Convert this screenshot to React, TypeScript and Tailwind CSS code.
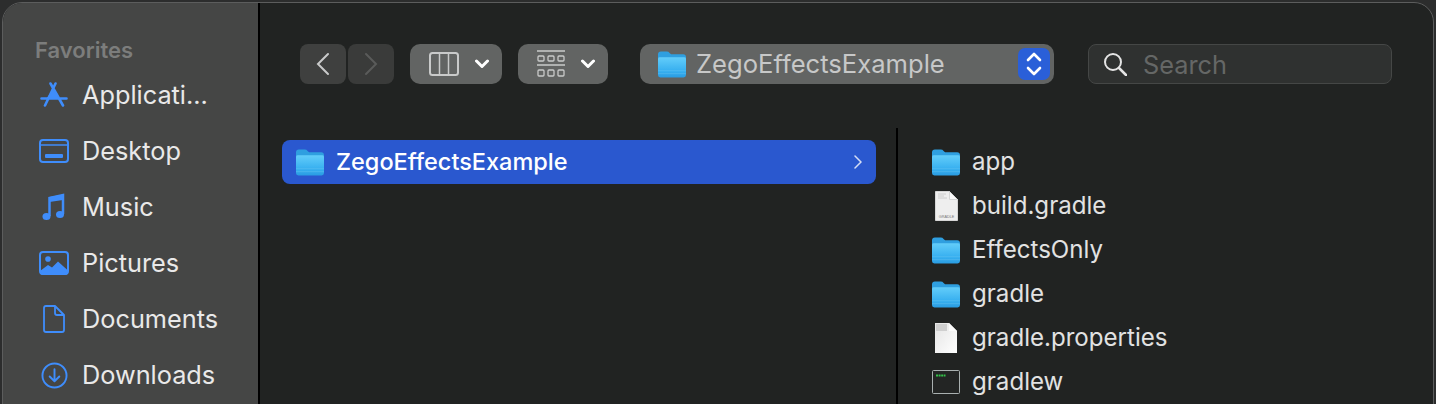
import type { ReactNode } from "react";

const FONT = "font-['Inter','Liberation_Sans',sans-serif]";

function FolderIcon({ className }: { className: string }) {
  return (
    <svg viewBox="0 0 29 27" className={className}>
      <defs>
        <linearGradient id="folderFront" x1="0" y1="0" x2="0" y2="1">
          <stop offset="0" stopColor="#63cdfa" />
          <stop offset="0.7" stopColor="#35aeef" />
          <stop offset="1" stopColor="#2a9ce2" />
        </linearGradient>
      </defs>
      <path d="M0 3q0-3 3-3h6q2 0 3 1.500l1.500 1.500h12.500q3 0 3 3v6h-29z" fill="#2f9fe0" />
      <path d="M0 7.500q0-1.500 2-1.500h25q2 0 2 1.500v17q0 2.500-2.500 2.500h-24q-2.500 0-2.500-2.500z" fill="url(#folderFront)" />
      <path d="M0 20h29M0 23h29" stroke="#6cc6f2" strokeOpacity="0.45" />
    </svg>
  );
}

function GradleFile() {
  return (
    <svg viewBox="0 0 23 30" className="h-[30px] w-[23px]">
      <path d="M0.500 0.500h14l8 8v21h-22z" fill="#eeeeee" stroke="#d6d6d6" />
      <path d="M14.500 0.500v8h8z" fill="#fafafa" stroke="#d6d6d6" />
      <path d="M3 3h8M3 5h6M3 7h9" stroke="#c4c4c4" strokeWidth="0.800" />
      <text x="11.500" y="27" textAnchor="middle" fontSize="3.800" fill="#777" fontFamily="Liberation Sans, sans-serif">GRADLE</text>
    </svg>
  );
}

function PropertiesFile() {
  return (
    <svg viewBox="0 0 22 30" className="h-[30px] w-[22px]">
      <defs>
        <linearGradient id="sheet" x1="0" y1="0" x2="1" y2="1">
          <stop offset="0" stopColor="#e4e4e4" />
          <stop offset="1" stopColor="#ffffff" />
        </linearGradient>
      </defs>
      <path d="M0 0h14l8 8v22h-22z" fill="url(#sheet)" />
      <path d="M14 0v8h8z" fill="#fbfbfb" />
      <rect x="1" y="1" width="11" height="7" fill="#cfcfcf" />
    </svg>
  );
}

function TerminalFile() {
  return (
    <svg viewBox="0 0 28 24" className="h-[24px] w-[28px]">
      <rect x="0.500" y="0.500" width="27" height="23" rx="1" fill="#232524" stroke="#a9b0b0" />
      <path d="M4 5.500h9.500" stroke="#35c24a" strokeWidth="2" strokeDasharray="2 0.600" />
    </svg>
  );
}

function SideRow({ icon, label }: { icon: ReactNode; label: string }) {
  return (
    <div className="flex h-[56px] items-center">
      <div className="flex w-[38px] shrink-0 items-center justify-center">{icon}</div>
      <span className="ml-[9px] text-[25.300px] leading-none text-[#e9e9e9]">{label}</span>
    </div>
  );
}

function ListRow({ icon, label }: { icon: ReactNode; label: string }) {
  return (
    <div className="flex h-[44px] items-center">
      <div className="flex w-[30px] shrink-0 items-center justify-center">{icon}</div>
      <span className="ml-[11px] text-[24.100px] leading-none text-[#e2e2e2]">{label}</span>
    </div>
  );
}

export default function App() {
  return (
    <div className={`h-[404px] w-[1436px] overflow-hidden bg-[#2c2d2d] pl-[2px] pr-[2px] pt-[2px] ${FONT}`}>
      <div className="flex h-[420px] overflow-hidden rounded-t-[20px] border border-[#5c5d5d] bg-[#212322]">
        <aside className="w-[257px] shrink-0 border-r-[2px] border-black bg-[#454645] pl-[32px]">
          <div className="pt-[35px] text-[22px] font-semibold leading-[24px] text-[#7c7d7c]">Favorites</div>
          <div className="mt-[5px]">
            <SideRow
              label="Applicati..."
              icon={
                <svg viewBox="0 0 28 26" className="h-[26px] w-[28px]" fill="none" stroke="#3f8dfb" strokeWidth="2.600" strokeLinecap="round">
                  <path d="M15.500 1.500L5 23.500M10.500 1.500L23 23.500M1.500 16.500h25" />
                  <path d="M13 7.500l6.500 9h-13z" fill="#3f8dfb" stroke="none" />
                </svg>
              }
            />
            <SideRow
              label="Desktop"
              icon={
                <svg viewBox="0 0 30 24" className="h-[24px] w-[30px]" fill="none">
                  <rect x="1" y="1" width="28" height="22" rx="3" stroke="#3f8dfb" strokeWidth="2" />
                  <path d="M1 6h28" stroke="#3f8dfb" strokeWidth="1.500" />
                  <rect x="6" y="15" width="18" height="4" rx="1" fill="#3f8dfb" />
                </svg>
              }
            />
            <SideRow
              label="Music"
              icon={
                <svg viewBox="0 0 24 28" className="h-[28px] w-[24px]" fill="none" stroke="#3f8dfb">
                  <path d="M7.500 23V5L21 2v19" strokeWidth="2.500" />
                  <path d="M7.500 4L21 1.500V7L7.500 9z" fill="#3f8dfb" stroke="none" />
                  <ellipse cx="4.500" cy="23.500" rx="4" ry="3.500" fill="#3f8dfb" stroke="none" />
                  <ellipse cx="18" cy="21.500" rx="4" ry="3.500" fill="#3f8dfb" stroke="none" />
                </svg>
              }
            />
            <SideRow
              label="Pictures"
              icon={
                <svg viewBox="0 0 30 24" className="h-[24px] w-[30px]">
                  <rect x="1" y="1" width="28" height="22" rx="3" fill="none" stroke="#3f8dfb" strokeWidth="2" />
                  <circle cx="9" cy="8" r="2.800" fill="#3f8dfb" />
                  <path d="M1 20l8-6 4 2.500 6-6 10 9v1.500q0 3-3 3h-22q-3 0-3-3z" fill="#3f8dfb" />
                </svg>
              }
            />
            <SideRow
              label="Documents"
              icon={
                <svg viewBox="0 0 22 28" className="h-[28px] w-[22px]" fill="none" stroke="#3f8dfb" strokeWidth="1.800" strokeLinejoin="round">
                  <path d="M3 1h9l9 9v15q0 2-2 2h-16q-2 0-2-2v-22q0-2 2-2z" />
                  <path d="M12 1v7q0 2 2 2h7" />
                </svg>
              }
            />
            <SideRow
              label="Downloads"
              icon={
                <svg viewBox="0 0 28 28" className="h-[27px] w-[27px]" fill="none" stroke="#3f8dfb" strokeWidth="2" strokeLinecap="round" strokeLinejoin="round">
                  <circle cx="14" cy="14" r="12.500" />
                  <path d="M14 7.500v12M9 15l5 5 5-5" />
                </svg>
              }
            />
          </div>
        </aside>

        <main className="min-w-0 flex-1">
          <div className="flex h-[125px] items-center pb-[3px] pl-[40px]">
            <div className="flex gap-[2px]">
              <div className="flex h-[40px] w-[46px] items-center justify-center rounded-[8px] bg-[#3f403f]">
                <svg viewBox="0 0 14 24" className="h-[24px] w-[14px]" fill="none" stroke="#c9caca" strokeWidth="2" strokeLinecap="round">
                  <path d="M12 2L2 12l10 10" />
                </svg>
              </div>
              <div className="flex h-[40px] w-[46px] items-center justify-center rounded-[8px] bg-[#3a3b3a]">
                <svg viewBox="0 0 14 24" className="h-[24px] w-[14px]" fill="none" stroke="#5a5b5a" strokeWidth="2" strokeLinecap="round">
                  <path d="M2 2l10 10L2 22" />
                </svg>
              </div>
            </div>

            <div className="ml-[16px] flex h-[40px] w-[92px] items-center rounded-[10px] bg-[#626463] pl-[19px]">
              <svg viewBox="0 0 30 24" className="h-[24px] w-[30px]" fill="none" stroke="#c9caca" strokeWidth="2">
                <rect x="1" y="1" width="28" height="22" rx="2.500" />
                <path d="M10.500 1v22M19.500 1v22" strokeWidth="1.500" />
              </svg>
              <svg viewBox="0 0 14 10" className="ml-[16px] h-[10px] w-[14px]" fill="none" stroke="#fff" strokeWidth="3" strokeLinecap="round" strokeLinejoin="round">
                <path d="M1.500 2l5.500 5.500L12.500 2" />
              </svg>
            </div>

            <div className="ml-[16px] flex h-[40px] w-[90px] items-center rounded-[10px] bg-[#626463] pl-[19px]">
              <svg viewBox="0 0 28 28" className="h-[28px] w-[28px]" fill="none" stroke="#c9caca">
                <path d="M0 1h28M0 15h28" strokeWidth="1.500" />
                <rect x="1" y="6" width="6" height="5" rx="1" strokeWidth="1.300" />
                <rect x="11" y="6" width="6" height="5" rx="1" strokeWidth="1.300" />
                <rect x="21" y="6" width="6" height="5" rx="1" strokeWidth="1.300" />
                <rect x="1" y="20" width="6" height="6" rx="1" strokeWidth="1.300" />
                <rect x="11" y="20" width="6" height="6" rx="1" strokeWidth="1.300" />
                <rect x="21" y="20" width="6" height="6" rx="1" strokeWidth="1.300" />
              </svg>
              <svg viewBox="0 0 14 10" className="ml-[16px] h-[10px] w-[14px]" fill="none" stroke="#fff" strokeWidth="3" strokeLinecap="round" strokeLinejoin="round">
                <path d="M1.500 2l5.500 5.500L12.500 2" />
              </svg>
            </div>

            <div className="ml-[32px] flex h-[40px] w-[414px] items-center rounded-[10px] bg-[#626463] pl-[18px] pr-[4px]">
              <FolderIcon className="h-[27px] w-[28px]" />
              <span className="ml-[10px] flex-1 text-[25.600px] leading-none text-[#c7c8c8]">ZegoEffectsExample</span>
              <div className="flex h-[32px] w-[32px] items-center justify-center rounded-[7px] bg-[#2a5fd8]">
                <svg viewBox="0 0 16 26" className="h-[26px] w-[16px]" fill="none" stroke="#fff" strokeWidth="2.600" strokeLinecap="round" strokeLinejoin="round">
                  <path d="M2 9l6-6 6 6M2 17l6 6 6-6" />
                </svg>
              </div>
            </div>

            <div className="ml-[34px] flex h-[40px] w-[304px] items-center rounded-[8px] border border-[#454746] bg-[#2f3130] pl-[14px]">
              <svg viewBox="0 0 24 24" className="h-[24px] w-[24px]" fill="none" stroke="#e4e4e4" strokeWidth="2" strokeLinecap="round">
                <circle cx="10" cy="10" r="8" />
                <path d="M16 16l7 7" strokeWidth="2.500" />
              </svg>
              <span className="ml-[16px] translate-y-[1px] text-[25.300px] leading-none text-[#656766]">Search</span>
            </div>
          </div>

          <div className="flex">
            <div className="w-[636px] shrink-0 pl-[22px] pr-[20px] pt-[12px]">
              <div className="flex h-[44px] items-center rounded-[8px] bg-[#2a58cf] pl-[14px] pr-[14px]">
                <FolderIcon className="h-[27px] w-[28px]" />
                <span className="ml-[12px] flex-1 text-[23.500px] font-medium leading-none text-white">ZegoEffectsExample</span>
                <svg viewBox="0 0 8 14" className="h-[14px] w-[8px]" fill="none" stroke="#d5def5" strokeWidth="1.500" strokeLinecap="round">
                  <path d="M1 1l6 6-6 6" />
                </svg>
              </div>
            </div>
            <div className="flex-1 border-l-[2px] border-black pl-[33px] pt-[12px]">
              <ListRow icon={<FolderIcon className="h-[27px] w-[28px]" />} label="app" />
              <ListRow icon={<GradleFile />} label="build.gradle" />
              <ListRow icon={<FolderIcon className="h-[27px] w-[28px]" />} label="EffectsOnly" />
              <ListRow icon={<FolderIcon className="h-[27px] w-[28px]" />} label="gradle" />
              <ListRow icon={<PropertiesFile />} label="gradle.properties" />
              <ListRow icon={<TerminalFile />} label="gradlew" />
            </div>
          </div>
        </main>
      </div>
    </div>
  );
}
